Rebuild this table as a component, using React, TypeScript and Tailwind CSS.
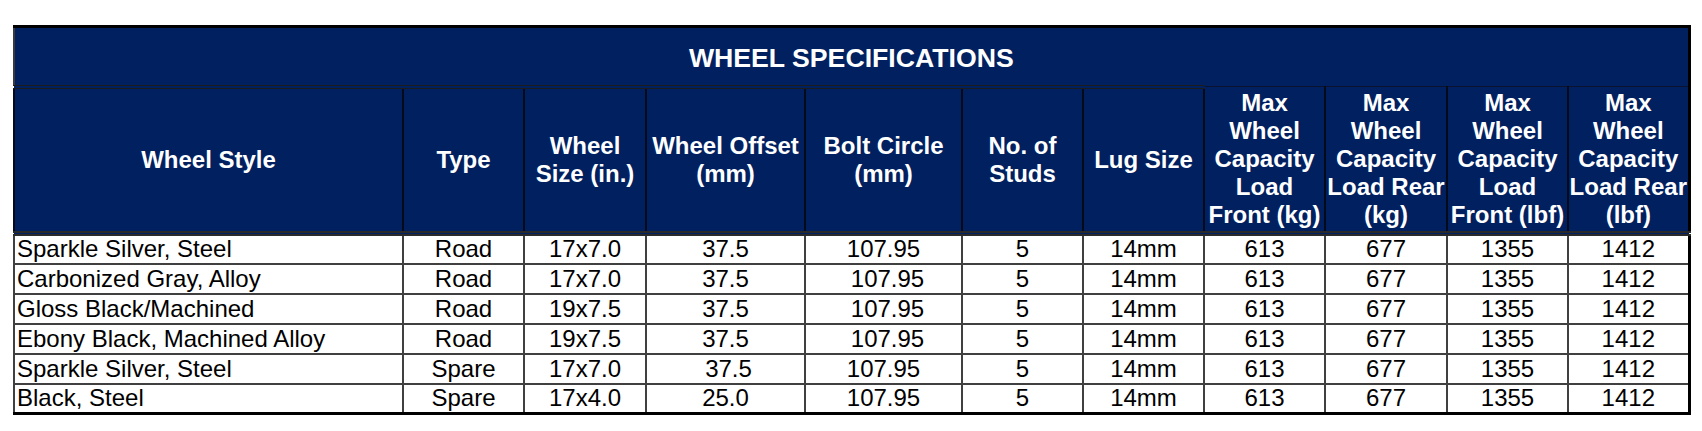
import React from "react";

interface WheelRow {
  style: string;
  type: string;
  size: string;
  offset: string;
  bolt: string;
  studs: string;
  lug: string;
  frontKg: string;
  rearKg: string;
  frontLbf: string;
  rearLbf: string;
  offsetShift?: boolean; // values typed with a leading space in the sheet
  boltShift?: boolean;
}

const rows: WheelRow[] = [
  { style: "Sparkle Silver, Steel", type: "Road", size: "17x7.0", offset: "37.5", bolt: "107.95", studs: "5", lug: "14mm", frontKg: "613", rearKg: "677", frontLbf: "1355", rearLbf: "1412" },
  { style: "Carbonized Gray, Alloy", type: "Road", size: "17x7.0", offset: "37.5", bolt: "107.95", studs: "5", lug: "14mm", frontKg: "613", rearKg: "677", frontLbf: "1355", rearLbf: "1412", boltShift: true },
  { style: "Gloss Black/Machined", type: "Road", size: "19x7.5", offset: "37.5", bolt: "107.95", studs: "5", lug: "14mm", frontKg: "613", rearKg: "677", frontLbf: "1355", rearLbf: "1412", boltShift: true },
  { style: "Ebony Black, Machined Alloy", type: "Road", size: "19x7.5", offset: "37.5", bolt: "107.95", studs: "5", lug: "14mm", frontKg: "613", rearKg: "677", frontLbf: "1355", rearLbf: "1412", boltShift: true },
  { style: "Sparkle Silver, Steel", type: "Spare", size: "17x7.0", offset: "37.5", bolt: "107.95", studs: "5", lug: "14mm", frontKg: "613", rearKg: "677", frontLbf: "1355", rearLbf: "1412", offsetShift: true },
  { style: "Black, Steel", type: "Spare", size: "17x4.0", offset: "25.0", bolt: "107.95", studs: "5", lug: "14mm", frontKg: "613", rearKg: "677", frontLbf: "1355", rearLbf: "1412" },
];

const colWidths = [389, 121, 122, 159, 157, 121, 121, 121, 122, 121, 121];

// header cells under the title (first seven have the double rule above them)
const mainHeads = ["Wheel Style", "Type", "Wheel Size (in.)", "Wheel Offset (mm)", "Bolt Circle (mm)", "No. of Studs", "Lug Size"];
const loadHeads = [
  "Max Wheel Capacity Load Front (kg)",
  "Max Wheel Capacity Load Rear (kg)",
  "Max Wheel Capacity Load Front (lbf)",
  "Max Wheel Capacity Load Rear (lbf)",
];

const headCell =
  "h-[147px] px-0 align-middle text-center font-bold leading-[28px] text-white border-x-2 border-x-[#050a1a] border-b-[5px] border-b-[#2a2a2a] border-double";
const dataCell = "h-[30px] p-0 text-center align-middle border-2 border-[#404040]";

export default function App() {
  return (
    <div className="min-h-[431px] bg-white pt-[25px] pl-[13px] font-['Liberation_Sans',Arial,sans-serif] text-[24px] text-black">
      <table className="table-fixed border-collapse w-[1675px] border-t-[3px] border-t-black border-l-2 border-l-[#3a3a3a] border-r-[3px] border-r-black border-b-[3px] border-b-black">
        <colgroup>
          {colWidths.map((w, i) => (
            <col key={i} style={{ width: w }} />
          ))}
        </colgroup>
        <thead className="bg-[#002060]">
          <tr>
            <th
              colSpan={11}
              className="h-[60px] p-0 pt-[3px] text-center align-middle text-[26.67px] font-bold leading-[30px] text-white border-b border-b-[#0a1230]"
            >
              WHEEL SPECIFICATIONS
            </th>
          </tr>
          <tr>
            {mainHeads.map((h) => (
              <th
                key={h}
                className={`${headCell} border-t-4 border-t-[#1c1c1c]`}
              >
                {h}
              </th>
            ))}
            {loadHeads.map((h) => (
              <th key={h} className={`${headCell} border-t border-t-[#0a1230]`}>
                {h}
              </th>
            ))}
          </tr>
        </thead>
        <tbody>
          {rows.map((r, i) => (
            <tr key={i} className="leading-[26px]">
              <td className={`${dataCell} pl-[2px] text-left whitespace-nowrap`}>{r.style}</td>
              <td className={dataCell}>{r.type}</td>
              <td className={dataCell}>{r.size}</td>
              <td className={`${dataCell} ${r.offsetShift ? "pl-[6px]" : ""}`}>{r.offset}</td>
              <td className={`${dataCell} ${r.boltShift ? "pl-[8px]" : ""}`}>{r.bolt}</td>
              <td className={dataCell}>{r.studs}</td>
              <td className={dataCell}>{r.lug}</td>
              <td className={dataCell}>{r.frontKg}</td>
              <td className={dataCell}>{r.rearKg}</td>
              <td className={dataCell}>{r.frontLbf}</td>
              <td className={dataCell}>{r.rearLbf}</td>
            </tr>
          ))}
        </tbody>
      </table>
    </div>
  );
}
